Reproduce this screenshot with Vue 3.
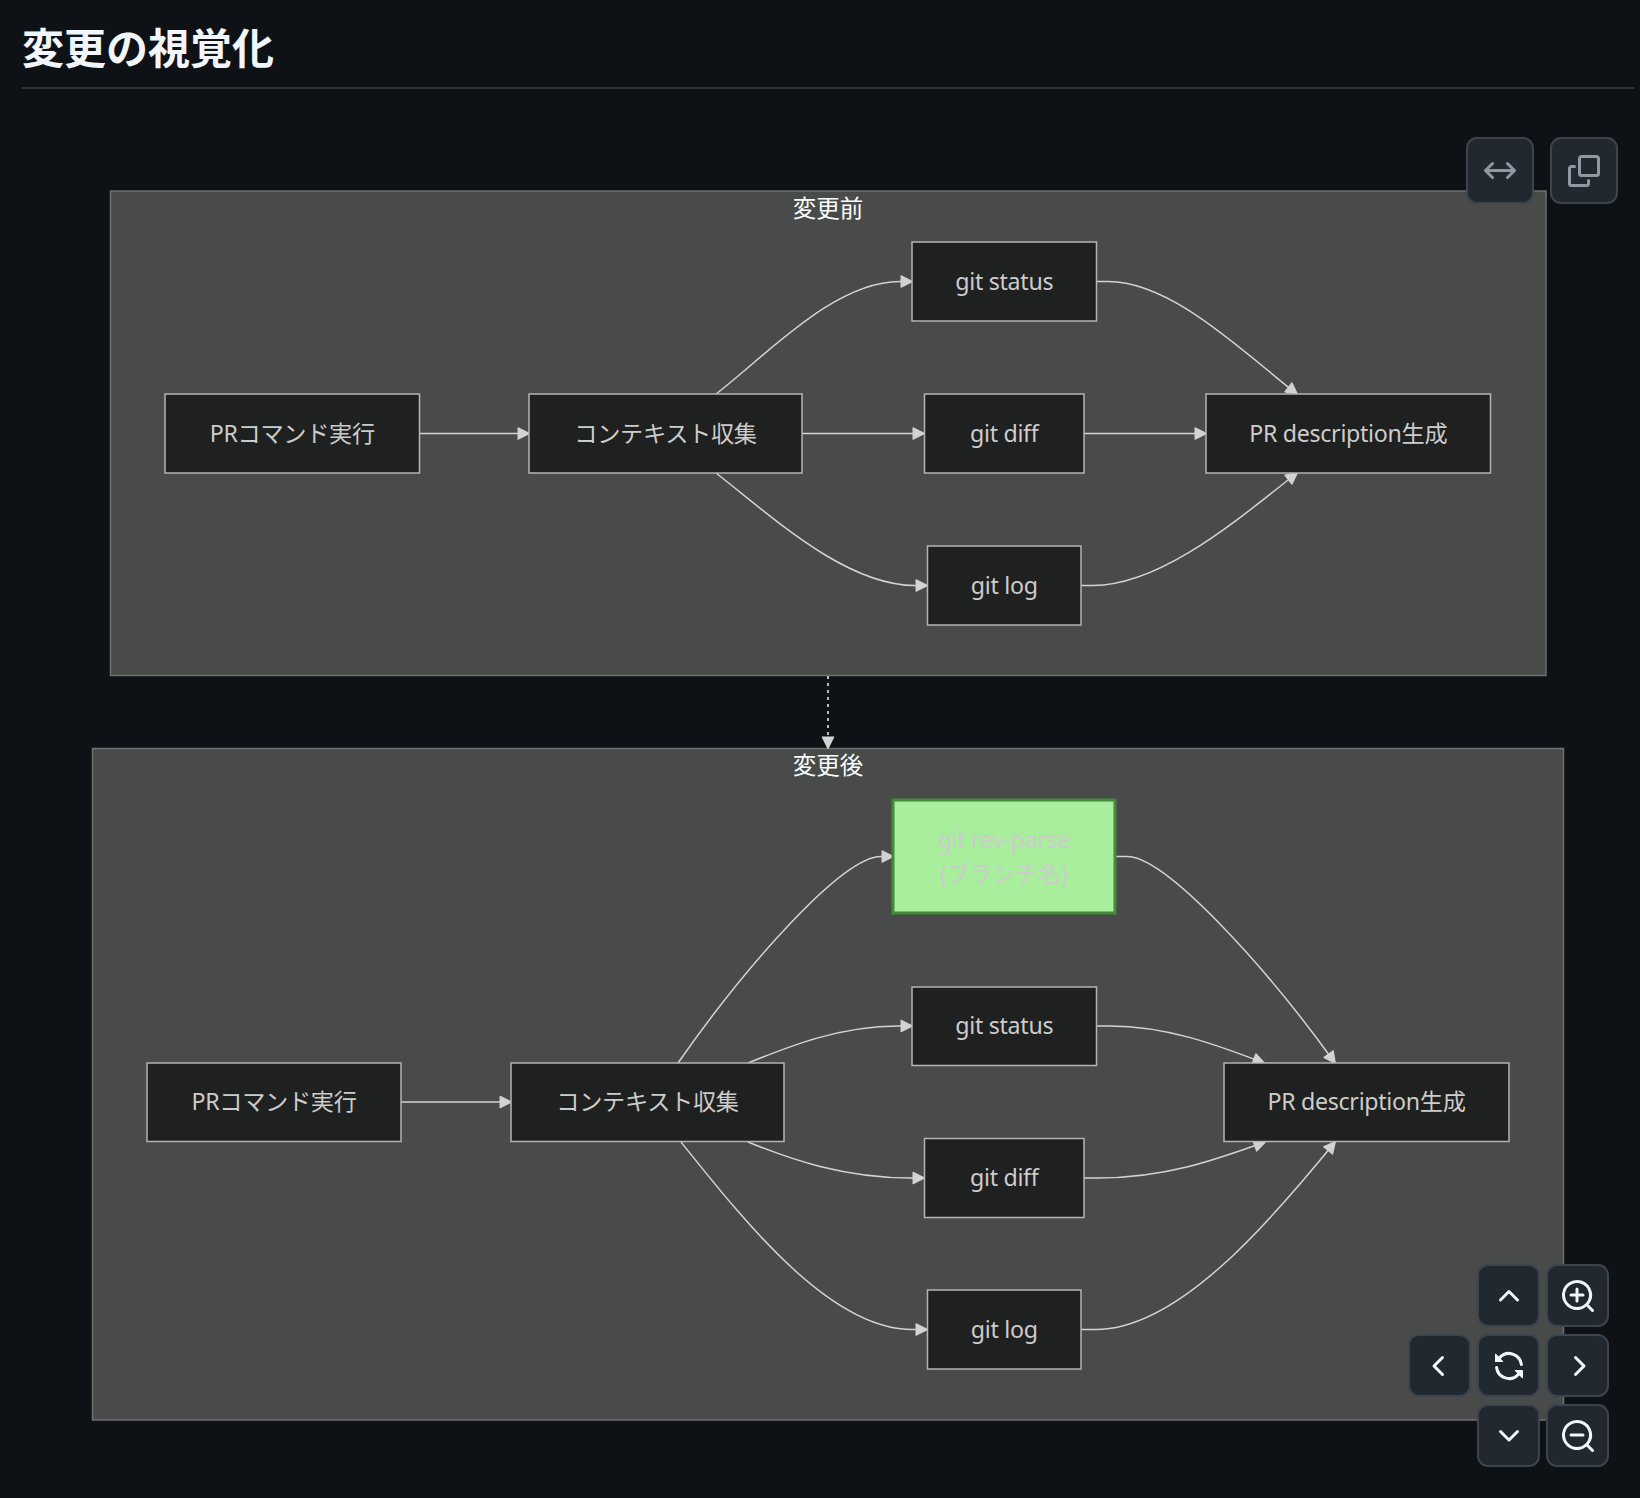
<script setup>
// diagram coordinates are page pixels, the svg viewBox starts under the heading
const clusters = [
  { id: 'before', x: 110.5, y: 191, w: 1435.5, h: 484.5, label: '変更前', ly: 207 },
  { id: 'after', x: 92.5, y: 748.5, w: 1471, h: 671.5, label: '変更後', ly: 764 }
]

const nodes = [
  { x: 165, y: 394, w: 254.5, h: 79, lines: ['PRコマンド実行'] },
  { x: 529, y: 394, w: 273, h: 79, lines: ['コンテキスト収集'] },
  { x: 912, y: 242, w: 184.5, h: 79, lines: ['git status'] },
  { x: 924.5, y: 394, w: 159.5, h: 79, lines: ['git diff'] },
  { x: 927.5, y: 546, w: 153.5, h: 79, lines: ['git log'] },
  { x: 1206, y: 394, w: 284.5, h: 79, lines: ['PR description生成'] },

  { x: 147, y: 1063, w: 254, h: 78.5, lines: ['PRコマンド実行'] },
  { x: 511, y: 1063, w: 273, h: 78.5, lines: ['コンテキスト収集'] },
  { x: 893, y: 800, w: 222, h: 113, lines: ['git rev-parse', '(ブランチ名)'], added: true },
  { x: 912, y: 987, w: 184.5, h: 78.5, lines: ['git status'] },
  { x: 924.5, y: 1138.5, w: 159.5, h: 79, lines: ['git diff'] },
  { x: 927.5, y: 1290, w: 153.5, h: 79, lines: ['git log'] },
  { x: 1224, y: 1063, w: 285, h: 78.5, lines: ['PR description生成'] }
]

const edges = [
  'M419 433.5 L529 433.5',
  'M716 394 C770 352 835 281.5 900 281.5 L912 281.5',
  'M802 433.5 L924 433.5',
  'M716 473 C770 515 845 585.5 915 585.5 L927 585.5',
  'M1096 281.5 L1108 281.5 C1172 281.5 1243 352 1297 394',
  'M1084 433.5 L1206 433.5',
  'M1081 585.5 L1093 585.5 C1163 585.5 1243 515 1297 473',

  'M401 1102 L511 1102',
  'M678 1063 C745 967 842 856.5 881 856.5 L893 856.5',
  'M748 1063 C790 1046 840 1026 898 1026 L912 1026',
  'M748 1142 C792 1160 845 1178 910 1178 L924 1178',
  'M681 1142 C745 1222 830 1329.5 912 1329.5 L927 1329.5',
  'M1115 856.5 L1127 856.5 C1166 856.5 1266 967 1335 1063',
  'M1096 1026 L1110 1026 C1165 1026 1215 1044 1264 1063',
  'M1084 1178 L1098 1178 C1165 1178 1215 1160 1265 1142',
  'M1081 1329.5 L1096 1329.5 C1178 1329.5 1270 1222 1335 1142'
]

const lens = 'M7.5 0a7.5 7.5 0 0 1 5.807 12.247l2.473 2.473a.749.749 0 1 1-1.06 1.06l-2.473-2.473A7.5 7.5 0 1 1 7.5 0Zm-6 7.5a6 6 0 1 0 12 0 6 6 0 0 0-12 0Z'

const controls = [
  { name: 'up', col: 2, row: 1, d: 'M3.22 10.53a.749.749 0 0 1 0-1.06l4.25-4.25a.749.749 0 0 1 1.06 0l4.25 4.25a.749.749 0 1 1-1.06 1.06L8 6.811 4.28 10.53a.749.749 0 0 1-1.06 0Z' },
  { name: 'zoom-in', col: 3, row: 1, d: lens + 'M3.75 7.5a.75.75 0 0 1 .75-.75h2.25V4.5a.75.75 0 0 1 1.5 0v2.25h2.25a.75.75 0 0 1 0 1.5H8.25v2.25a.75.75 0 0 1-1.5 0V8.25H4.5a.75.75 0 0 1-.75-.75Z' },
  { name: 'left', col: 1, row: 2, d: 'M9.78 12.78a.75.75 0 0 1-1.06 0L4.47 8.53a.75.75 0 0 1 0-1.06l4.25-4.25a.751.751 0 0 1 1.042.018.751.751 0 0 1 .018 1.042L6.06 8l3.72 3.72a.75.75 0 0 1 0 1.06Z' },
  { name: 'reset', col: 2, row: 2, d: 'M1.705 8.005a.75.75 0 0 1 .834.656 5.5 5.5 0 0 0 9.592 2.97l-1.204-1.204a.25.25 0 0 1 .177-.427h3.646a.25.25 0 0 1 .25.25v3.646a.25.25 0 0 1-.427.177l-1.38-1.38A7.002 7.002 0 0 1 1.05 8.84a.75.75 0 0 1 .656-.834ZM8 2.5a5.487 5.487 0 0 0-4.131 1.869l1.204 1.204A.25.25 0 0 1 4.896 6H1.25A.25.25 0 0 1 1 5.75V2.104a.25.25 0 0 1 .427-.177l1.38 1.38A7.002 7.002 0 0 1 14.95 7.16a.75.75 0 0 1-1.49.178A5.5 5.5 0 0 0 8 2.5Z' },
  { name: 'right', col: 3, row: 2, d: 'M6.22 3.22a.75.75 0 0 1 1.06 0l4.25 4.25a.75.75 0 0 1 0 1.06l-4.25 4.25a.751.751 0 0 1-1.042-.018.751.751 0 0 1-.018-1.042L9.94 8 6.22 4.28a.75.75 0 0 1 0-1.06Z' },
  { name: 'down', col: 2, row: 3, d: 'M12.78 5.22a.749.749 0 0 1 0 1.06l-4.25 4.25a.749.749 0 0 1-1.06 0L3.22 6.28a.749.749 0 1 1 1.06-1.06L8 8.939l3.72-3.719a.749.749 0 0 1 1.06 0Z' },
  { name: 'zoom-out', col: 3, row: 3, d: lens + 'M4.5 6.75h6a.75.75 0 0 1 0 1.5h-6a.75.75 0 0 1 0-1.5Z' }
]
</script>

<template>
  <div class="page">
    <h2 class="heading">変更の視覚化</h2>

    <div class="canvas">
      <svg class="diagram" viewBox="0 88 1640 1410" width="1640" height="1410">
        <defs>
          <marker id="arrow" viewBox="0 0 10 10" refX="9.5" refY="5" markerUnits="userSpaceOnUse" markerWidth="11.5" markerHeight="11.5" orient="auto" overflow="visible">
            <path d="M0 0 L10 5 L0 10 z" fill="#d3d3d3" stroke="#d3d3d3" stroke-width="1" stroke-linejoin="round" />
          </marker>
        </defs>

        <g v-for="c in clusters" :key="c.id">
          <rect class="cluster" :x="c.x" :y="c.y" :width="c.w" :height="c.h" />
          <text class="cluster-label" x="828" :y="c.ly">{{ c.label }}</text>
        </g>

        <path class="edge" v-for="(d, i) in edges" :key="i" :d="d" marker-end="url(#arrow)" />
        <path class="edge dotted" d="M828 676 L828 748" marker-end="url(#arrow)" />

        <g v-for="(n, i) in nodes" :key="i">
          <rect class="node" :class="{ added: n.added }" :x="n.x" :y="n.y" :width="n.w" :height="n.h" />
          <text
            class="node-label"
            v-for="(line, j) in n.lines"
            :key="j"
            :x="n.x + n.w / 2"
            :y="n.y + n.h / 2 - 1 + (j - (n.lines.length - 1) / 2) * 34"
          >{{ line }}</text>
        </g>
      </svg>

      <div class="actions">
        <button class="btn action">
          <svg viewBox="0 0 16 16" width="32" height="32"><path d="M3.72 3.72a.75.75 0 0 1 1.06 1.06L2.56 7h10.88l-2.22-2.22a.75.75 0 0 1 1.06-1.06l3.5 3.5a.75.75 0 0 1 0 1.06l-3.5 3.5a.75.75 0 1 1-1.06-1.06l2.22-2.22H2.56l2.22 2.22a.75.75 0 1 1-1.06 1.06l-3.5-3.5a.75.75 0 0 1 0-1.06Z" /></svg>
        </button>
        <button class="btn action">
          <svg viewBox="0 0 16 16" width="32" height="32"><path d="M0 6.75C0 5.784.784 5 1.75 5h1.5a.75.75 0 0 1 0 1.5h-1.5a.25.25 0 0 0-.25.25v7.5c0 .138.112.25.25.25h7.5a.25.25 0 0 0 .25-.25v-1.5a.75.75 0 0 1 1.5 0v1.5A1.75 1.75 0 0 1 9.25 16h-7.5A1.75 1.75 0 0 1 0 14.25Z" /><path d="M5 1.75C5 .784 5.784 0 6.75 0h7.5C15.216 0 16 .784 16 1.75v7.5A1.75 1.75 0 0 1 14.25 11h-7.5A1.75 1.75 0 0 1 5 9.25Zm1.75-.25a.25.25 0 0 0-.25.25v7.5c0 .138.112.25.25.25h7.5a.25.25 0 0 0 .25-.25v-7.5a.25.25 0 0 0-.25-.25Z" /></svg>
        </button>
      </div>

      <div class="controls">
        <button
          class="btn control"
          v-for="b in controls"
          :key="b.name"
          :style="{ gridColumn: b.col, gridRow: b.row }"
        >
          <svg viewBox="0 0 16 16" width="32" height="32"><path :d="b.d" /></svg>
        </button>
      </div>
    </div>
  </div>
</template>

<style>
html, body {
  background: #0e1217;
}
</style>

<style scoped>
.page {
  width: 1640px;
  height: 1498px;
  background: #0e1217;
  overflow: hidden;
}

.heading {
  margin: 0 6px -1px 22px;
  height: 87px;
  line-height: 91px;
  border-bottom: 2px solid #30343a;
  color: #f0f6fc;
  font-family: "Noto Sans CJK JP", "Liberation Sans", sans-serif;
  font-size: 42px;
  font-weight: 700;
}

.canvas {
  position: relative;
  height: 1410px;
}

.diagram {
  display: block;
}

.cluster {
  fill: #494b4a;
  stroke: #6e6f6e;
  stroke-width: 1.5;
}

.cluster-label {
  fill: #f9fffe;
  font-family: "Noto Sans CJK JP", sans-serif;
  font-size: 23.5px;
  text-anchor: middle;
  dominant-baseline: central;
}

.edge {
  fill: none;
  stroke: #d3d3d3;
  stroke-width: 1.5;
}

.edge.dotted {
  stroke: #b8b9ba;
  stroke-width: 2;
  stroke-dasharray: 3 4;
}

.node {
  fill: #1f2020;
  stroke: #b4b4b4;
  stroke-width: 1.5;
}

.node.added {
  fill: #a8ee9c;
  stroke: #45893a;
  stroke-width: 3;
}

.node-label {
  fill: #cccccc;
  font-family: "Noto Sans", "Noto Sans CJK JP", sans-serif;
  font-size: 23.2px;
  letter-spacing: -0.3px;
  text-anchor: middle;
  dominant-baseline: central;
}

.btn {
  display: flex;
  align-items: center;
  justify-content: center;
  box-sizing: border-box;
  padding: 0;
  background: #212830;
  border: 2px solid #3d444d;
  border-radius: 11px;
}

.btn svg {
  display: block;
}

.action svg {
  fill: #9198a1;
}

.control svg {
  fill: #f0f6fc;
}

.actions {
  position: absolute;
  top: 49px;
  right: 22px;
  display: flex;
  gap: 16px;
}

.action {
  width: 68px;
  height: 67px;
}

.controls {
  position: absolute;
  top: 1176px;
  right: 31px;
  display: grid;
  grid-template-columns: repeat(3, 63px);
  grid-template-rows: repeat(3, 63px);
  column-gap: 6px;
  row-gap: 7px;
}
</style>
